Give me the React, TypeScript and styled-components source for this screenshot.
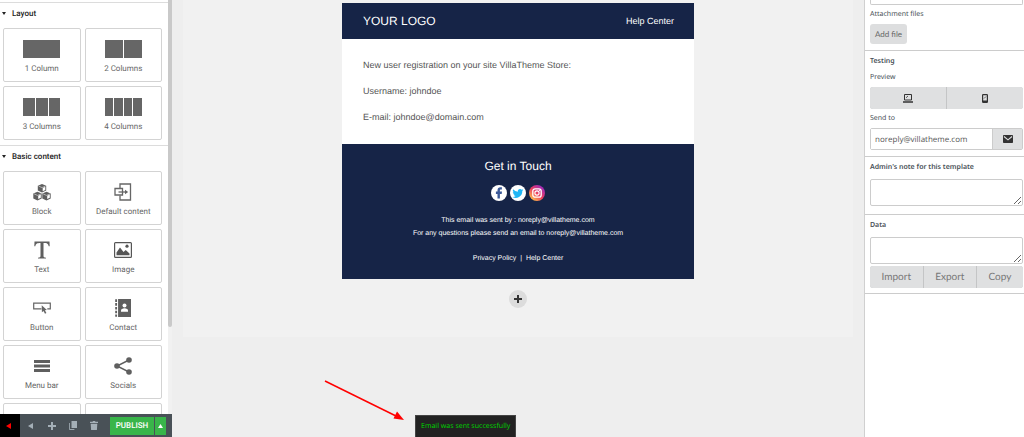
import React from "react";
import styled, { createGlobalStyle } from "styled-components";

const GlobalStyle = createGlobalStyle`
  *, *::before, *::after { box-sizing: border-box; }
  body { margin: 0; background: #eeeeee; font-family: "Liberation Sans", sans-serif; text-rendering: geometricPrecision; }
  h2, h3, p { margin: 0; font-weight: 400; }
  button, input, textarea { text-rendering: inherit; }
  button { font: inherit; padding: 0; border: 0; background: none; color: inherit; cursor: pointer; }
  a { color: inherit; text-decoration: none; }
  svg { display: block; }
`;

const Page = styled.div`
  position: relative;
  display: grid;
  grid-template-columns: 172px minmax(0, 1fr) 160px;
  height: 100vh;
  overflow: hidden;
`;

/* ---------- left sidebar ---------- */
const Sidebar = styled.aside`
  display: flex;
  flex-direction: column;
  min-height: 0;
  background: #fff;
`;
const SidebarBody = styled.div`
  flex: 1;
  min-height: 0;
  display: flex;
  overflow: hidden;
`;
const Sections = styled.div`
  flex: 1;
  padding-top: 2px;
`;
const Track = styled.div`
  width: 4px;
  background: #f1f1f1;
`;
const Thumb = styled.div`
  height: 79%;
  background: #c9c9c9;
  border-radius: 0 0 2px 2px;
`;
const Section = styled.section`
  border-top: 1px solid #dcdcdc;
  padding-bottom: 5px;
`;
const SectionTitle = styled.button`
  display: flex;
  align-items: center;
  gap: 6px;
  width: 100%;
  height: 20px;
  margin-bottom: 5px;
  padding-left: 2px;
  font-family: Roboto, sans-serif;
  font-size: 8px;
  font-weight: 500;
  color: #222;
`;
const Caret = styled.span`
  border: 2px solid transparent;
  border-top: 3px solid #222;
  border-bottom: 0;
`;
const Tiles = styled.div`
  display: grid;
  grid-template-columns: 1fr 1fr;
  gap: 4px;
  padding: 0 6px 0 3px;
`;
const Tile = styled.button`
  display: flex;
  flex-direction: column;
  align-items: center;
  height: 54px;
  padding-top: 10px;
  border: 1px solid #d3d3d3;
  border-radius: 2px;
  background: #fff;
  font-family: Roboto, sans-serif;
  font-size: 8px;
  line-height: 12px;
  color: #666;
`;
const TileIcon = styled.span`
  display: flex;
  align-items: center;
  justify-content: center;
  height: 20px;
  margin-bottom: 4px;
`;
const Columns = styled.span<{ $count: number }>`
  display: grid;
  grid-template-columns: repeat(${(p) => p.$count}, 1fr);
  gap: 1px;
  width: 37px;
  height: 18px;
`;
const Column = styled.span`
  background: #666;
`;

const Footer = styled.footer`
  display: flex;
  align-items: center;
  height: 23px;
  background: #495157;
  color: #a4afb7;
`;
const FooterButton = styled.button<{ $active?: boolean }>`
  display: flex;
  align-items: center;
  justify-content: center;
  width: ${(p) => (p.$active ? "20px" : "21px")};
  height: 23px;
  padding-right: ${(p) => (p.$active ? "4px" : "0")};
  background: ${(p) => (p.$active ? "#000" : "transparent")};
  color: ${(p) => (p.$active ? "#f00" : "inherit")};
`;
const Publish = styled.div`
  display: flex;
  gap: 1px;
  margin-left: 6px;
  height: 18px;
  color: #fff;
`;
const PublishButton = styled.button`
  display: flex;
  align-items: center;
  justify-content: center;
  width: 44px;
  background: #39b54a;
  font-family: Roboto, sans-serif;
  font-size: 8px;
  font-weight: 500;
`;
const PublishMore = styled(PublishButton)`
  width: 11px;
`;

/* ---------- canvas ---------- */
const Main = styled.main`
  padding: 0 11px;
  background: #eeeeee;
`;
const Canvas = styled.div`
  display: flex;
  flex-direction: column;
  align-items: center;
  padding: 3px 0 29px;
  background: #f1f1f1;
`;
const Email = styled.article`
  width: 100%;
  max-width: 352px;
  background: #fff;
`;
const EmailHeader = styled.header`
  display: flex;
  align-items: center;
  justify-content: space-between;
  height: 36px;
  padding: 0 20px 0 21px;
  background: #162447;
  color: #fff;
  font-size: 9px;
`;
const Logo = styled.span`
  font-size: 12px;
`;
const EmailBody = styled.div`
  display: grid;
  gap: 13px;
  padding: 20px 21px;
  font-size: 9px;
  line-height: 13px;
  color: #555;
`;
const EmailFooter = styled.footer`
  display: flex;
  flex-direction: column;
  align-items: center;
  padding: 14px 20px;
  background: #162447;
  color: #fff;
  font-size: 7px;
  line-height: 13px;
`;
const Touch = styled.h2`
  font-size: 12px;
  line-height: 16px;
`;
const SocialRow = styled.div`
  display: flex;
  gap: 3px;
  margin: 11px 0 13px;
`;
const Links = styled.p`
  margin-top: 12px;
  white-space: pre;
`;
const AddRow = styled.button`
  display: flex;
  align-items: center;
  justify-content: center;
  width: 18px;
  height: 18px;
  margin-top: 11px;
  border-radius: 50%;
  background: #dcdcdc;
  color: #333;
`;

/* ---------- settings panel ---------- */
const Panel = styled.aside`
  border-left: 1px solid #d0d0d0;
  background: #fff;
  font-family: "Noto Sans", sans-serif;
  color: #495157;
`;
const Group = styled.section<{ $bottom?: number }>`
  display: flex;
  flex-direction: column;
  padding: 5px 1px ${(p) => p.$bottom ?? 6}px 5px;
  border-bottom: 1px solid #ccc;
`;
const FirstGroup = styled(Group)`
  padding-top: 0;
`;
const Stub = styled.div`
  height: 5px;
  border: 1px solid #ccc;
  border-top: 0;
  border-radius: 0 0 2px 2px;
`;
const GroupTitle = styled.h3`
  font-size: 7px;
  line-height: 12px;
  font-weight: 600;
`;
const GroupLabel = styled.label`
  display: block;
  font-size: 7px;
  font-weight: 600;
  line-height: 12px;
  margin-bottom: 5px;
`;
const FieldLabel = styled.label`
  display: block;
  margin: 4px 0 3px;
  font-size: 7px;
  line-height: 12px;
`;
const AddFile = styled.button`
  align-self: flex-start;
  height: 20px;
  padding: 0 5px;
  border-radius: 3px;
  background: #dddedf;
  font-family: Lato, sans-serif;
  font-size: 8px;
  color: #666;
`;
const ButtonBar = styled.div`
  display: flex;
  gap: 1px;
  border-radius: 3px;
  overflow: hidden;
  background: #c4c5c6;
`;
const DataBar = styled(ButtonBar)`
  margin-top: 2px;
`;
const BarButton = styled.button`
  display: flex;
  flex: 1 1 auto;
  align-items: center;
  justify-content: center;
  height: 22px;
  background: #dfe0e1;
  color: #777;
  font-family: Lato, sans-serif;
  font-size: 10px;
`;
const PreviewButton = styled(BarButton)`
  flex: 1 1 0;
  color: #333;
`;
const SendRow = styled.div`
  display: flex;
  height: 22px;
  border: 1px solid #ccc;
  border-radius: 2px;
`;
const SendInput = styled.input`
  flex: 1;
  min-width: 0;
  padding: 0 4px;
  border: 0;
  background: #fff;
  font-family: "Open Sans", sans-serif;
  font-size: 8px;
  color: #555;
`;
const SendButton = styled.button`
  display: flex;
  align-items: center;
  justify-content: center;
  width: 30px;
  border-left: 1px solid #ccc;
  background: #dfe0e1;
  color: #333;
`;
const Note = styled.textarea`
  display: block;
  width: 100%;
  height: 27px;
  border: 1px solid #ccc;
  border-radius: 2px;
  background: #fff;
  resize: vertical;
`;

/* ---------- overlays ---------- */
const Toast = styled.div`
  position: absolute;
  left: 415px;
  bottom: 0;
  height: 22px;
  padding: 0 5px;
  background: #222;
  border: 1px solid #444;
  border-bottom: 0;
  font-family: "Noto Sans", sans-serif;
  font-size: 7px;
  line-height: 22px;
  color: #0c0;
`;
const Arrow = styled.svg`
  position: absolute;
  left: 322px;
  bottom: 15px;
`;

const BlockIcon = () => (
  <svg width="18" height="17" viewBox="0 0 18 17" fill="#5f5f5f">
    {[[9, 4.2], [4.5, 12], [13.5, 12]].map(([x, y]) => (
      <g key={x} transform={`translate(${x} ${y})`}>
        <path d="M0-4.200 4.200-2.400V2.400L0 4.400-4.200 2.400V-2.400Z" />
        <path d="M.7-.3 3.300-1.500V1.700L.7 3Z" fill="#fff" />
        <path d="M-3.400-2.100 0-.6 3.400-2.100" fill="none" stroke="#fff" strokeWidth=".5" />
      </g>
    ))}
  </svg>
);
const DefaultIcon = () => (
  <svg width="18" height="18" viewBox="0 0 18 18" fill="none" stroke="#666" strokeWidth="1.300">
    <path d="M6 5.500V1h10.500v16H6v-4.500" />
    <path d="M1 5.500h7.500v6.500H1z" />
    <path d="M4.500 9h8" />
    <path d="m11 6.800 3.200 2.200-3.200 2.200z" fill="#666" stroke="none" />
  </svg>
);
const TextIcon = () => (
  <svg width="16" height="18" viewBox="0 0 16 18" fill="#5f5f5f">
    <path d="M.5.500h15l.2 4.800h-1C14.300 2.600 13.300 1.900 9.500 1.900V14.800c0 1.500.7 1.700 2.500 1.900v.8H4v-.8c1.800-.2 2.500-.4 2.500-1.900V1.900C2.700 1.900 1.700 2.600 1.300 5.300H.3z" />
  </svg>
);
const ImageIcon = () => (
  <svg width="18" height="16" viewBox="0 0 18 16" fill="#555">
    <path d="M1.500 0h15A1.500 1.500 0 0 1 18 1.500v13a1.500 1.500 0 0 1-1.500 1.500h-15A1.500 1.500 0 0 1 0 14.500v-13A1.500 1.500 0 0 1 1.500 0zm-.3 1.200v13.600h15.600V1.200z" fillRule="evenodd" />
    <path d="M2.500 13.200V10.500L6 5.500l3.500 4.500 2.200-2 3.800 3.500v1.700z" />
    <circle cx="13" cy="4.200" r="1.600" />
  </svg>
);
const ButtonIcon = () => (
  <svg width="18" height="12" viewBox="0 0 18 12">
    <path d="M8.500 6.800H.7V1.200h16.600v5.600h-3" fill="none" stroke="#666" strokeWidth="1.200" />
    <path d="m8.700 3.200.2 7 1.600-1.300L12 11.800l1.400-.7-1.500-2.800 2-.2z" fill="#666" />
  </svg>
);
const ContactIcon = () => (
  <svg width="16" height="18" viewBox="0 0 16 18">
    <path d="M3 0h13v18H3z" fill="#5f5f5f" />
    <path d="M1.200.3v17.500" stroke="#5f5f5f" strokeWidth="2" strokeDasharray="2.600 1.200" />
    <path d="M2.600 0v18" stroke="#fff" strokeWidth=".8" />
    <circle cx="9.500" cy="6.500" r="2" fill="#fff" />
    <path d="M6 12.800v-1.300c0-1.200 1.500-2.200 3.500-2.200s3.500 1 3.500 2.200v1.300z" fill="#fff" />
  </svg>
);
const MenuIcon = () => (
  <svg width="16" height="12" viewBox="0 0 16 12" fill="#5f5f5f">
    <path d="M0 0h16v3H0zM0 4.500h16v3H0zM0 9h16v3H0z" />
  </svg>
);
const ShareIcon = () => (
  <svg width="18" height="18" viewBox="0 0 18 18" fill="#5f5f5f">
    <path d="M15 3 3 9l12 6" fill="none" stroke="#5f5f5f" strokeWidth="1.400" />
    <circle cx="15" cy="3" r="2.800" />
    <circle cx="3" cy="9" r="2.800" />
    <circle cx="15" cy="15" r="2.800" />
  </svg>
);
const TriangleLeft = () => (
  <svg width="5" height="6" viewBox="0 0 5 6" fill="currentColor"><path d="M5 0v6L0 3z" /></svg>
);
const Plus = () => (
  <svg width="8" height="8" viewBox="0 0 8 8" fill="none" stroke="currentColor" strokeWidth="2"><path d="M4 0v8M0 4h8" /></svg>
);

const Facebook = () => (
  <svg width="16" height="16" viewBox="0 0 16 16">
    <circle cx="8" cy="8" r="8" fill="#fff" />
    <path d="M6.500 13.500V8.900H4.900V6.600h1.600V5.400c0-2.100 1.100-3.100 2.900-3.100h1.500v2.200H9.900c-.8 0-1 .3-1 1v1.100H11l-.3 2.300H8.900v4.600z" fill="#3b5998" />
  </svg>
);
const Twitter = () => (
  <svg width="16" height="16" viewBox="0 0 16 16">
    <circle cx="8" cy="8" r="8" fill="#fff" />
    <path d="M13.500 5c-.4.200-.8.300-1.300.4.500-.3.800-.7 1-1.200-.5.200-1 .4-1.500.5a2.300 2.300 0 0 0-3.900 2.100A6.500 6.500 0 0 1 3.100 4.300a2.300 2.300 0 0 0 .7 3c-.4 0-.7-.1-1-.3 0 1.100.8 2 1.800 2.300-.3.100-.7.100-1 0 .3.900 1.100 1.600 2.100 1.600a4.600 4.600 0 0 1-3.400 1 6.500 6.500 0 0 0 10-5.800c.5-.3.900-.7 1.200-1.100z" fill="#1fb6f5" />
  </svg>
);
const Instagram = () => (
  <svg width="16" height="16" viewBox="0 0 16 16">
    <defs>
      <linearGradient id="insta" x1="0.100" y1="0.900" x2="0.800" y2="0.100">
        <stop offset="0" stopColor="#fdc84b" />
        <stop offset="0.500" stopColor="#ee3f5c" />
        <stop offset="1" stopColor="#a02bb8" />
      </linearGradient>
    </defs>
    <circle cx="8" cy="8" r="8" fill="url(#insta)" />
    <rect x="3.800" y="3.800" width="8.400" height="8.400" rx="2.300" fill="none" stroke="#fff" strokeWidth="1.300" />
    <circle cx="8" cy="8" r="2.100" fill="none" stroke="#fff" strokeWidth="1.100" />
    <circle cx="10.500" cy="5.500" r=".6" fill="#fff" />
  </svg>
);

const basics: [string, React.ReactNode][] = [
  ["Block", <BlockIcon />],
  ["Default content", <DefaultIcon />],
  ["Text", <TextIcon />],
  ["Image", <ImageIcon />],
  ["Button", <ButtonIcon />],
  ["Contact", <ContactIcon />],
  ["Menu bar", <MenuIcon />],
  ["Socials", <ShareIcon />],
  ["", null],
  ["", null],
];

export default function App() {
  return (
    <Page>
      <GlobalStyle />
      <Sidebar>
        <SidebarBody>
          <Sections>
            <Section>
              <SectionTitle><Caret />Layout</SectionTitle>
              <Tiles>
                {[1, 2, 3, 4].map((n) => (
                  <Tile key={n}>
                    <TileIcon>
                      <Columns $count={n}>
                        {Array.from({ length: n }, (_, i) => <Column key={i} />)}
                      </Columns>
                    </TileIcon>
                    {`${n} ${n === 1 ? "Column" : "Columns"}`}
                  </Tile>
                ))}
              </Tiles>
            </Section>
            <Section>
              <SectionTitle><Caret />Basic content</SectionTitle>
              <Tiles>
                {basics.map(([label, icon], i) => (
                  <Tile key={i}><TileIcon>{icon}</TileIcon>{label}</Tile>
                ))}
              </Tiles>
            </Section>
          </Sections>
          <Track><Thumb /></Track>
        </SidebarBody>
        <Footer>
          <FooterButton $active aria-label="Collapse"><TriangleLeft /></FooterButton>
          <FooterButton aria-label="Back"><TriangleLeft /></FooterButton>
          <FooterButton aria-label="Add"><Plus /></FooterButton>
          <FooterButton aria-label="Duplicate">
            <svg width="8" height="9" viewBox="0 0 8 9" fill="currentColor">
              <path d="M2.500 0H8v7H2.500z" />
              <path d="M.4 2v6.500h5" fill="none" stroke="currentColor" strokeWidth=".9" />
            </svg>
          </FooterButton>
          <FooterButton aria-label="Delete">
            <svg width="8" height="9" viewBox="0 0 8 9" fill="currentColor">
              <path d="M0 .800h2.500L3 0h2l.5.800H8V2H0zM.7 2.700h6.600L6.900 9H1.100z" />
            </svg>
          </FooterButton>
          <Publish>
            <PublishButton>PUBLISH</PublishButton>
            <PublishMore aria-label="Publish options">
              <svg width="5" height="4" viewBox="0 0 5 4" fill="#fff"><path d="M2.500 0 5 4H0z" /></svg>
            </PublishMore>
          </Publish>
        </Footer>
      </Sidebar>

      <Main>
        <Canvas>
          <Email>
            <EmailHeader>
              <Logo>YOUR LOGO</Logo>
              <a href="#help">Help Center</a>
            </EmailHeader>
            <EmailBody>
              <p>New user registration on your site VillaTheme Store:</p>
              <p>Username: johndoe</p>
              <p>E-mail: johndoe@domain.com</p>
            </EmailBody>
            <EmailFooter>
              <Touch>Get in Touch</Touch>
              <SocialRow>
                <a href="#facebook" aria-label="Facebook"><Facebook /></a>
                <a href="#twitter" aria-label="Twitter"><Twitter /></a>
                <a href="#instagram" aria-label="Instagram"><Instagram /></a>
              </SocialRow>
              <p>This email was sent by : <a href="#mail">noreply@villatheme.com</a></p>
              <p>For any questions please send an email to <a href="#mail">noreply@villatheme.com</a></p>
              <Links><a href="#privacy">Privacy Policy</a>{"  |  "}<a href="#help">Help Center</a></Links>
            </EmailFooter>
          </Email>
          <AddRow aria-label="Add row"><Plus /></AddRow>
        </Canvas>
      </Main>

      <Panel>
        <FirstGroup>
          <Stub />
          <FieldLabel as="span">Attachment files</FieldLabel>
          <AddFile>Add file</AddFile>
        </FirstGroup>
        <Group>
          <GroupTitle>Testing</GroupTitle>
          <FieldLabel as="span">Preview</FieldLabel>
          <ButtonBar>
            <PreviewButton aria-label="Desktop">
              <svg width="10" height="9" viewBox="0 0 10 9" fill="none" stroke="currentColor">
                <path d="M1.500.500h7v5.500h-7z" />
                <path d="M0 8h10" strokeWidth="1.500" />
                <path d="M3 3.800 5 2" strokeWidth=".8" />
              </svg>
            </PreviewButton>
            <PreviewButton aria-label="Mobile">
              <svg width="6" height="9" viewBox="0 0 6 9" fill="none" stroke="currentColor">
                <rect x=".6" y=".6" width="4.800" height="7.800" rx=".6" strokeWidth="1.200" />
                <path d="M.5 7.300h5" strokeWidth="1.600" />
                <path d="M2 4.500 4 2.500" strokeWidth=".7" />
              </svg>
            </PreviewButton>
          </ButtonBar>
          <FieldLabel htmlFor="send">Send to</FieldLabel>
          <SendRow>
            <SendInput id="send" defaultValue="noreply@villatheme.com" />
            <SendButton aria-label="Send">
              <svg width="10" height="8" viewBox="0 0 10 8">
                <rect width="10" height="8" rx=".8" fill="currentColor" />
                <path d="m1 1.500 4 3.300 4-3.300" fill="none" stroke="#dfe0e1" strokeWidth="1.100" />
              </svg>
            </SendButton>
          </SendRow>
        </Group>
        <Group $bottom={8}>
          <GroupLabel htmlFor="note">Admin's note for this template</GroupLabel>
          <Note id="note" />
        </Group>
        <Group $bottom={5}>
          <GroupLabel htmlFor="data">Data</GroupLabel>
          <Note id="data" />
          <DataBar>
            <BarButton>Import</BarButton>
            <BarButton>Export</BarButton>
            <BarButton>Copy</BarButton>
          </DataBar>
        </Group>
      </Panel>

      <Arrow width="90" height="44" viewBox="0 0 90 44">
        <path d="M3 3 74 38" stroke="#f00" strokeWidth="1.500" />
        <path d="M82 42 71.500 40.500 75 33.500z" fill="#f00" />
      </Arrow>
      <Toast role="status">Email was sent successfully</Toast>
    </Page>
  );
}
